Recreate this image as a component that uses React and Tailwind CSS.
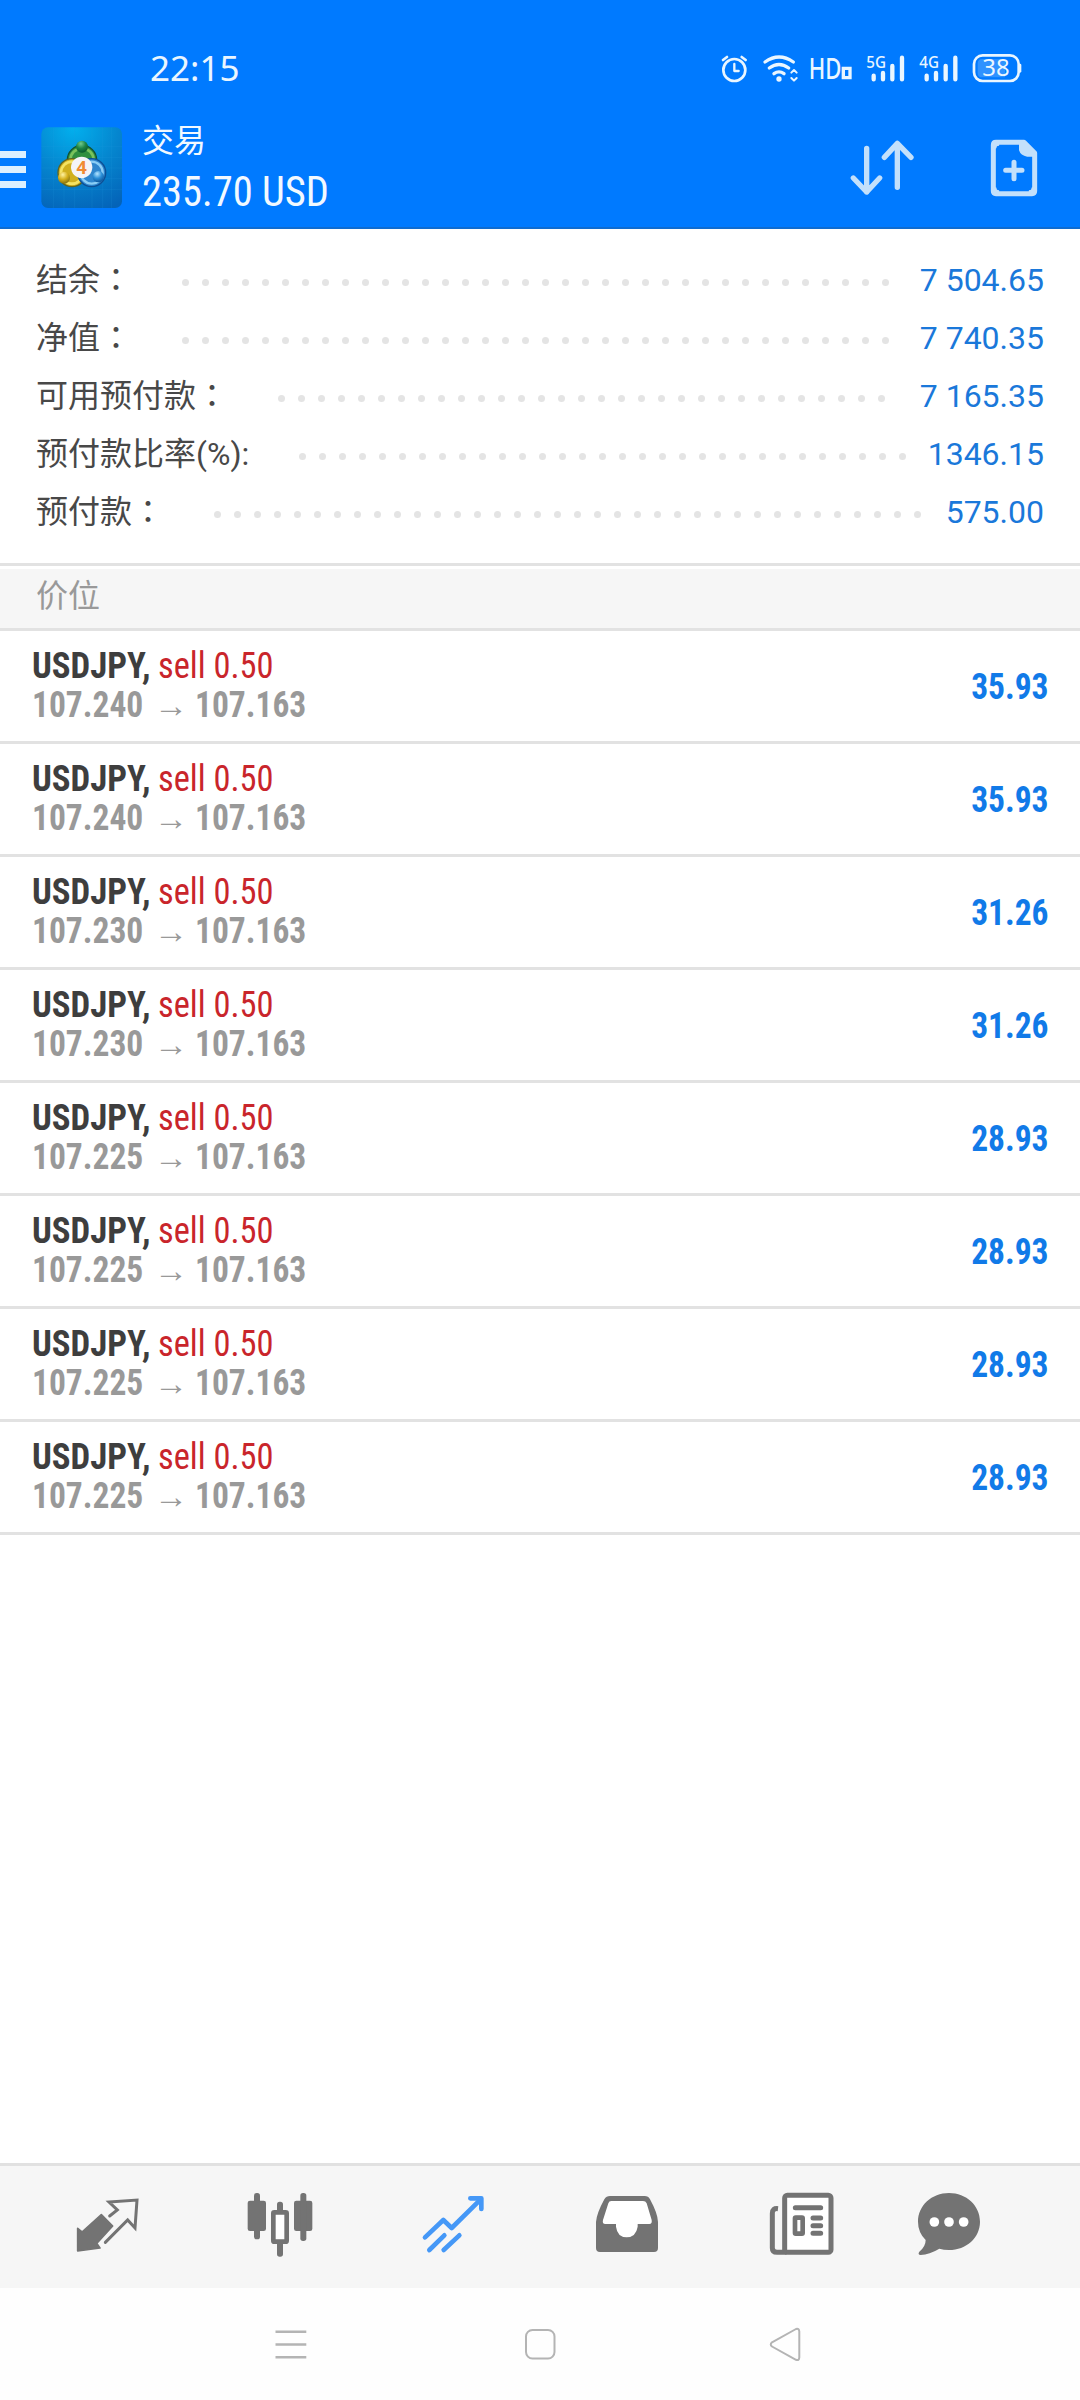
const SUMMARY = [
  { label: '结余', suffix: '：', value: '7 504.65', dots: 36, labelBox: 'w-[146px]' },
  { label: '净值', suffix: '：', value: '7 740.35', dots: 36, labelBox: 'w-[146px]' },
  { label: '可用预付款', suffix: '：', value: '7 165.35', dots: 31, labelBox: 'w-[242px]' },
  { label: '预付款比率', suffix: '(%):', value: '1346.15', dots: 31, labelBox: 'w-[263px]' },
  { label: '预付款', suffix: '：', value: '575.00', dots: 36, labelBox: 'w-[178px]' },
];

const POSITIONS = [
  ['107.240', '35.93'],
  ['107.240', '35.93'],
  ['107.230', '31.26'],
  ['107.230', '31.26'],
  ['107.225', '28.93'],
  ['107.225', '28.93'],
  ['107.225', '28.93'],
  ['107.225', '28.93'],
];

function StatusBar() {
  return (
    <div className="flex h-[112px] items-start text-[#eaf6ff]">
      <span className="ml-[150px] mt-[44px] w-[100px] font-['Noto_Sans',sans-serif] text-[35px] leading-[48px]">22:15</span>
      <svg className="ml-[450px] mt-[40px]" width="340" height="60" viewBox="0 0 1020 180" fill="none" stroke="currentColor" strokeLinecap="round" strokeLinejoin="round">
        <circle cx="103" cy="90" r="33" strokeWidth="8" />
        <path d="M103 72v21h13" strokeWidth="7" />
        <path d="M69 60l12-9M137 60l-12-9" strokeWidth="8" />
        <g strokeWidth="10">
          <path d="M195 66q42-30 85 0M208 84q29-21 58 0M222 101q15-11 30 0" />
        </g>
        <circle cx="237" cy="117" r="8" fill="currentColor" stroke="none" />
        <path d="M274 98l8-8 8 8M274 114l8 8 8-8" strokeWidth="6" />
        <path d="M430 85h20v28h-20z" strokeWidth="10" strokeLinejoin="miter" />
        <g strokeWidth="13">
          <path d="M521 107v11M549 99v19M577 78v40M606 53v65" />
          <path d="M680 107v11M708 99v19M737 78v40M766 53v65" />
        </g>
        <rect x="822" y="46" width="134" height="77" rx="26" strokeWidth="8" />
        <path d="M846 57H915V112H846Q833 112 833 98V71Q833 57 846 57Z" fill="#2f92ff" stroke="none" />
        <path d="M960 75v19" strokeWidth="8" />
        <g fill="currentColor" stroke="none" fontFamily="Noto Sans, sans-serif">
          <text x="326" y="116" fontSize="88" fontWeight="500" textLength="98" lengthAdjust="spacingAndGlyphs">HD</text>
          <text x="499" y="84" fontSize="50" fontWeight="500" textLength="59" lengthAdjust="spacingAndGlyphs">5G</text>
          <text x="658" y="84" fontSize="50" fontWeight="500" textLength="59" lengthAdjust="spacingAndGlyphs">4G</text>
          <text x="847" y="109" fontSize="70" textLength="82" lengthAdjust="spacingAndGlyphs">38</text>
        </g>
      </svg>
    </div>
  );
}

function AppLogo() {
  return (
    <svg className="ml-[10px] mt-[8px]" width="92" height="92" viewBox="0 0 276 276">
      <defs>
        <radialGradient id="sky" cx="0.4" cy="0" r="1.1">
          <stop offset="0" stopColor="#02b0ee" />
          <stop offset="0.5" stopColor="#0586cf" />
          <stop offset="1" stopColor="#0463b8" />
        </radialGradient>
        <radialGradient id="green" cx="0.4" cy="0.25" r="0.8">
          <stop offset="0" stopColor="#72c98c" />
          <stop offset="0.5" stopColor="#1e8445" />
          <stop offset="1" stopColor="#075328" />
        </radialGradient>
        <radialGradient id="gold" cx="0.4" cy="0.25" r="0.8">
          <stop offset="0" stopColor="#fff3a0" />
          <stop offset="0.5" stopColor="#d5b01c" />
          <stop offset="1" stopColor="#7a6a10" />
        </radialGradient>
        <radialGradient id="azure" cx="0.4" cy="0.25" r="0.8">
          <stop offset="0" stopColor="#b5e4ff" />
          <stop offset="0.5" stopColor="#2b8fd8" />
          <stop offset="1" stopColor="#0a4f95" />
        </radialGradient>
      </defs>
      <rect x="16" y="22" width="242" height="242" rx="20" fill="url(#sky)" />
      <path d="M16 80H258M16 112H258M16 144H258M16 176H258M16 208H258M52 22V264M84 22V264M116 22V264M168 22V264M200 22V264M226 22V264" stroke="#2ba0e0" strokeOpacity="0.25" strokeWidth="2" />
      <circle cx="138" cy="120" r="44" fill="#2f8f3f" stroke="#14502f" strokeWidth="4" />
      <circle cx="138" cy="120" r="35" fill="none" stroke="#79c25c" strokeWidth="8" />
      <circle cx="108" cy="158" r="42" fill="#d0b01e" stroke="#5f6420" strokeWidth="4" />
      <circle cx="108" cy="158" r="33" fill="none" stroke="#f4e262" strokeWidth="8" />
      <circle cx="167" cy="158" r="42" fill="#2f86ce" stroke="#0d4f95" strokeWidth="4" />
      <circle cx="167" cy="158" r="33" fill="none" stroke="#8acdf5" strokeWidth="7" />
      <circle cx="138" cy="80" r="18" fill="url(#green)" />
      <circle cx="84" cy="173" r="18" fill="url(#gold)" />
      <circle cx="187" cy="170" r="17" fill="url(#azure)" />
      <circle cx="137" cy="142" r="32" fill="#f4f4f7" />
      <text x="137" y="161" textAnchor="middle" fontFamily="Open Sans, sans-serif" fontSize="54" fontWeight="700" fill="#f08b32">4</text>
    </svg>
  );
}

function Header() {
  return (
    <header className="h-[229px] border-b-2 border-[#0f6cd0] bg-[#007aff]">
      <StatusBar />
      <div className="flex h-[115px] items-start">
        <div className="mt-[39px] flex w-[26px] flex-col gap-2 text-[#dcefff]">
          <span className="h-[7px] bg-current" />
          <span className="h-[7px] bg-current" />
          <span className="h-[7px] bg-current" />
        </div>
        <AppLogo />
        <div className="ml-[14px] mt-[6px] w-[200px] whitespace-nowrap text-[#f2f9ff]">
          <div className="font-['Noto_Sans_CJK_SC',sans-serif] text-[32px] leading-10">交易</div>
          <div className="mt-[3px] origin-left scale-x-[0.965] font-['Roboto',sans-serif] text-[42px] leading-[62px] [font-stretch:75%]">235.70 USD</div>
        </div>
        <svg className="ml-[458px]" width="280" height="115" viewBox="0 6 840 345" fill="none" stroke="#c3e0fb" strokeLinecap="round" strokeLinejoin="round">
          <path d="M200 115V246M160 204l40 42 39-42M292 232V100M253 142l39-42 41 42" strokeWidth="16" />
          <path d="M588 97H672L704 129V243Q704 251 696 251H588Q580 251 580 243V105Q580 97 588 97Z" strokeWidth="15" />
          <path d="M661 97V120Q665 134 682 136H704L672 97Z" fill="#c3e0fb" strokeWidth="8" />
          <path d="M586 112q0-8 8-8M698 236q0 8-8 8M586 236q0 8 8 8" strokeWidth="8" />
          <path d="M617 181h49M642 157v49" strokeWidth="15" />
        </svg>
      </div>
    </header>
  );
}

function Summary() {
  return (
    <section className="h-[334px] pt-[22px]">
      {SUMMARY.map((row) => (
        <div key={row.label} className="flex h-[58px] items-center whitespace-nowrap pl-9 pr-9">
          <span className={`${row.labelBox} shrink-0 pb-1 font-['Noto_Sans_CJK_SC',sans-serif] text-[32px] leading-[50px] text-[#484848]`}>
            {row.label}
            <span className="font-['Roboto','Noto_Sans_CJK_TC',sans-serif]" lang="zh-Hant">{row.suffix}</span>
          </span>
          <span className="mt-[5px] flex gap-[13px]">
            {Array.from({ length: row.dots }, (_, i) => (
              <i key={i} className="size-[7px] rounded-full bg-[#e4e4e4]" />
            ))}
          </span>
          <span className="ml-auto font-['Roboto',sans-serif] text-[32px] text-[#1a78da]">{row.value}</span>
        </div>
      ))}
    </section>
  );
}

function Position({ open, profit }) {
  return (
    <div className="flex h-[113px] justify-between border-b-3 border-[#e2e2e2] pl-8 pr-[31px] font-['Roboto',sans-serif] text-[37px] [font-stretch:75%]">
      <div className="whitespace-nowrap pt-[15px]">
        <div className="flex h-[39px] items-center leading-[39px]">
          <span className="w-[126px] origin-left scale-x-[0.94] font-bold text-[#3e3e3e]">USDJPY,</span>
          <span className="origin-left scale-x-[0.93] text-[#c9252b]">sell 0.50</span>
        </div>
        <div className="flex h-[39px] items-center font-bold leading-[39px] text-[#999]">
          <span className="w-[122px] origin-left scale-x-[0.905]">{open}</span>
          <span className="mt-0.5 w-[41px] text-[34px] font-medium">→</span>
          <span className="origin-left scale-x-[0.905]">107.163</span>
        </div>
      </div>
      <span className="mt-[2px] origin-right scale-x-[0.905] self-center text-[37px] font-bold text-[#117ae8]">{profit}</span>
    </div>
  );
}

function TabBar() {
  return (
    <nav className="flex h-[125px] items-start border-t-3 border-[#e1e1e1] bg-[#f6f6f6] pt-[22px] text-[#737373]">
      <svg className="ml-[72px]" width="70" height="70" viewBox="96 114 210 210">
        <path d="M113 235L126 246 184 194 218 228 170 280 180 294 113 303Z" fill="currentColor" stroke="currentColor" strokeWidth="5" strokeLinejoin="round" />
        <path d="M209 198L232 180 207 156 291 150 285 234 263 210 196 277" fill="none" stroke="currentColor" strokeWidth="9" strokeLinecap="round" />
      </svg>
      <svg className="ml-[103px]" width="70" height="70" viewBox="615 114 210 210">
        <g fill="currentColor">
          <rect x="623" y="152" width="55" height="91" rx="7" />
          <rect x="762" y="152" width="55" height="91" rx="7" />
          <rect x="642" y="129" width="18" height="139" rx="8" />
          <rect x="781" y="129" width="18" height="144" rx="8" />
          <rect x="711" y="155" width="18" height="34" rx="8" />
          <rect x="711" y="274" width="18" height="46" rx="8" />
        </g>
        <rect x="700" y="187" width="40" height="88" rx="3" fill="#fff" stroke="currentColor" strokeWidth="14" />
      </svg>
      <svg className="ml-[103px]" width="70" height="70" viewBox="1134 114 210 210" fill="none" stroke="#4598f7" strokeWidth="14" strokeLinecap="round" strokeLinejoin="round">
        <path d="M1155 262L1210 210 1235 234 1322 148M1168 300L1213 256M1211 300L1258 256" />
        <path d="M1291 145H1324V177" />
      </svg>
      <svg className="ml-[104px]" width="70" height="70" viewBox="96 114 210 210">
        <path d="M150 138H254Q265 138 270 148Q293 190 294 216V294Q294 306 282 306H120Q108 306 108 294V216Q110 190 133 148Q139 138 150 138Z" fill="currentColor" />
        <path d="M154 153H249Q257 153 260 160L275 210Q277 222 268 222H233V230Q228 261 200 262Q172 261 168 230V222H136Q126 222 129 210L145 160Q147 153 154 153Z" fill="#fff" />
      </svg>
      <svg className="ml-[104px]" width="70" height="70" viewBox="618 114 210 210" fill="none" stroke="currentColor">
        <rect x="674" y="136" width="139" height="171" rx="8" fill="#fff" strokeWidth="15" />
        <path d="M654 176Q637 174 637 190V294Q637 307 651 307H680" strokeWidth="15" />
        <path d="M706 173H782M759 204H782M759 227H782M759 250H782" strokeWidth="15" strokeLinecap="round" />
        <rect x="705" y="203" width="23" height="48" rx="2" strokeWidth="14" />
      </svg>
      <svg className="ml-[78px]" width="70" height="70" viewBox="1062 114 210 210">
        <path d="M1167 129C1219 129 1260 167 1260 215C1260 263 1219 300 1167 300Q1151 300 1138 296Q1108 314 1082 315Q1072 314 1078 305Q1097 290 1097 270Q1074 247 1074 215C1074 167 1115 129 1167 129Z" fill="currentColor" />
        <g fill="#fff">
          <circle cx="1123" cy="216" r="14.500" />
          <circle cx="1167" cy="216" r="14.500" />
          <circle cx="1211" cy="216" r="14.500" />
        </g>
      </svg>
    </nav>
  );
}

function SystemNav() {
  return (
    <div className="flex h-[112px] items-start bg-[#fefefe] pt-8">
      <svg className="ml-[260px]" width="60" height="60" viewBox="0 0 60 60" stroke="#b4b4b4" strokeWidth="2.500">
        <path d="M15.500 11.800H46.300M15.500 24.400H46.300M15.500 37.200H46.300" />
      </svg>
      <svg className="ml-[190px]" width="60" height="60" viewBox="0 0 60 60" fill="none" stroke="#b4b4b4" strokeWidth="2">
        <rect x="16" y="10" width="28.500" height="28.500" rx="6.500" />
      </svg>
      <svg className="ml-[185px]" width="60" height="60" viewBox="0 0 60 60" fill="none" stroke="#b4b4b4" strokeWidth="2" strokeLinejoin="round">
        <path d="M41 9Q44 8 44.300 11.500V37.500Q44 41 41 39.800L17 26.500Q14.500 24.400 17 22.300Z" />
      </svg>
    </div>
  );
}

export default function App() {
  return (
    <div className="flex h-[2400px] w-[1080px] flex-col overflow-hidden bg-white">
      <Header />
      <Summary />
      <div className="h-[68px] border-y-3 border-[#e2e2e2] bg-[#f6f6f6]">
        <div className="flex h-[62px] items-center border-t-3 border-white pb-[12px] pl-9 font-['Noto_Sans_CJK_SC',sans-serif] text-[32px] text-[#999]">价位</div>
      </div>
      {POSITIONS.map(([open, profit], i) => (
        <Position key={i} open={open} profit={profit} />
      ))}
      <div className="flex-1" />
      <TabBar />
      <SystemNav />
    </div>
  );
}
